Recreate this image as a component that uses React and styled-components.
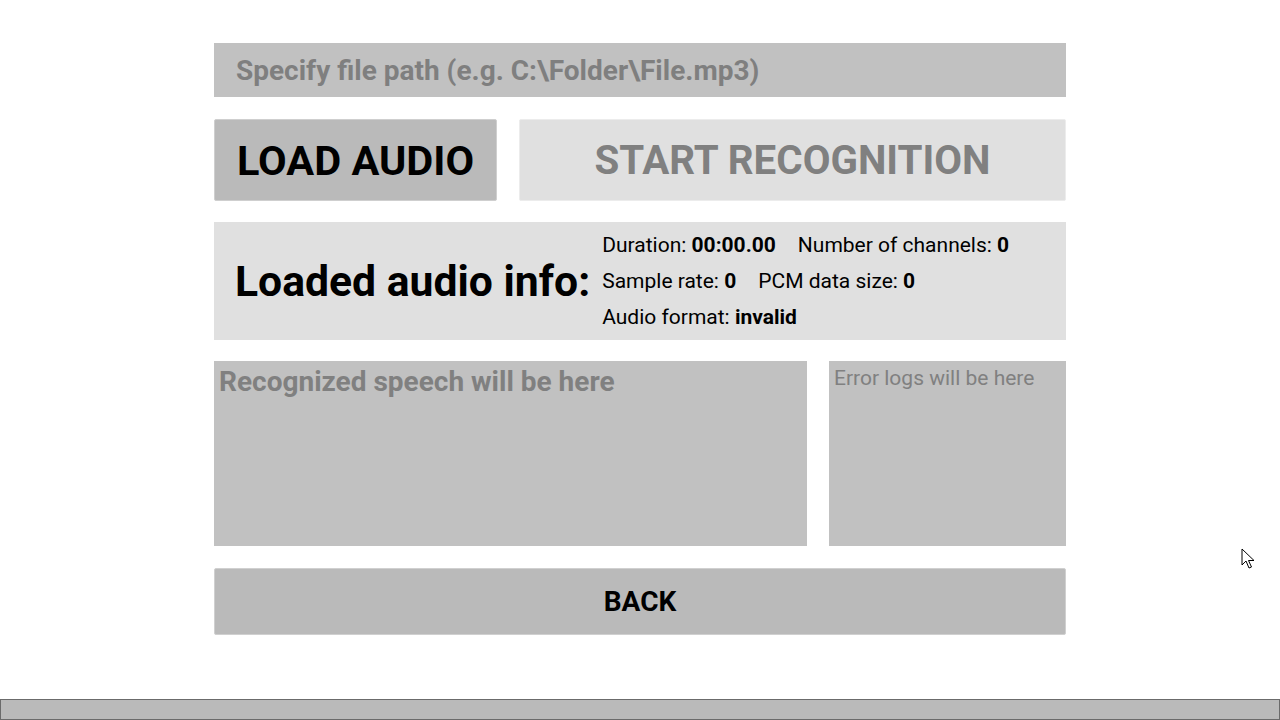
import React from "react";
import styled, { createGlobalStyle } from "styled-components";

const Global = createGlobalStyle`
  html, body { margin: 0; padding: 0; background: #ffffff; }
  body { font-family: Roboto, "Liberation Sans", sans-serif; }
  * { box-sizing: border-box; }
`;

const Page = styled.div`
  position: relative;
  width: 1280px;
  height: 720px;
  display: flex;
  flex-direction: column;
  overflow: hidden;
`;

const Content = styled.main`
  width: 852px;
  margin: 43px auto 0;
  display: flex;
  flex-direction: column;
  gap: 21px;
`;

const PathInput = styled.input`
  height: 54px;
  width: 100%;
  border: none;
  outline: none;
  background: #c1c1c1;
  padding: 0 22px;
  font-family: Roboto, "Liberation Sans", sans-serif;
  font-weight: 700;
  font-size: 28px;
  color: #7f7f7f;
  &::placeholder { color: #7f7f7f; opacity: 1; }
`;

const ButtonRow = styled.div`
  display: flex;
  gap: 22px;
  height: 82px;
  margin-top: 1px;
`;

const Button = styled.button`
  flex: ${(p) => (p.$grow ? "1 1 auto" : "0 0 auto")};
  width: ${(p) => (p.$width ? `${p.$width}px` : "auto")};
  height: 100%;
  border: 1px solid ${(p) => p.$border};
  border-radius: 2px;
  background: ${(p) => p.$bg};
  color: ${(p) => p.$color};
  font-family: Roboto, "Liberation Sans", sans-serif;
  font-weight: 700;
  font-size: ${(p) => p.$size}px;
  padding: 0;
  display: flex;
  align-items: center;
  justify-content: center;
  cursor: default;
`;

const InfoPanel = styled.section`
  height: 118px;
  background: #e0e0e0;
  display: flex;
  align-items: center;
  padding-left: 21px;
`;

const InfoTitle = styled.h2`
  margin: 0 12px 0 0;
  font-size: 42.7px;
  font-weight: 700;
  color: #000;
  white-space: nowrap;
`;

const InfoList = styled.div`
  display: flex;
  flex-direction: column;
`;

const InfoLine = styled.div`
  display: flex;
  gap: 22px;
  font-size: 21px;
  line-height: 36px;
  color: #000;
`;

const Field = styled.span`
  white-space: nowrap;
  b { font-weight: 700; }
`;

const Outputs = styled.div`
  display: flex;
  gap: 22px;
  height: 185px;
`;

const OutputBox = styled.div`
  flex: ${(p) => (p.$width ? `0 0 ${p.$width}px` : "1 1 auto")};
  background: #c1c1c1;
  color: #808080;
  font-size: ${(p) => p.$size}px;
  font-weight: ${(p) => p.$weight};
  padding: ${(p) => p.$pad};
  line-height: 1.2;
`;

const BackButton = styled(Button)`
  flex: 0 0 auto;
  height: 67px;
  width: 100%;
  margin-top: 1px;
`;

const StatusBar = styled.footer`
  margin-top: auto;
  height: 21px;
  width: 100%;
  background: #bababa;
  border: 1px solid #6b6b6b;
`;

const Cursor = styled.svg`
  position: absolute;
  left: 1241px;
  top: 548px;
`;

export default function App() {
  return (
    <Page>
      <Global />
      <Content>
        <PathInput placeholder="Specify file path (e.g. C:\Folder\File.mp3)" />
        <ButtonRow>
          <Button $width={283} $bg="#bababa" $border="#cfcfcf" $color="#000" $size={41.5}>
            LOAD AUDIO
          </Button>
          <Button $grow $bg="#e0e0e0" $border="#ececec" $color="#808080" $size={40.3}>
            START RECOGNITION
          </Button>
        </ButtonRow>
        <InfoPanel>
          <InfoTitle>Loaded audio info:</InfoTitle>
          <InfoList>
            <InfoLine>
              <Field>Duration: <b>00:00.00</b></Field>
              <Field>Number of channels: <b>0</b></Field>
            </InfoLine>
            <InfoLine>
              <Field>Sample rate: <b>0</b></Field>
              <Field>PCM data size: <b>0</b></Field>
            </InfoLine>
            <InfoLine>
              <Field>Audio format: <b>invalid</b></Field>
            </InfoLine>
          </InfoList>
        </InfoPanel>
        <Outputs>
          <OutputBox $size={28} $weight={700} $pad="4px 5px">
            Recognized speech will be here
          </OutputBox>
          <OutputBox $width={237} $size={21} $weight={400} $pad="5px 5px">
            Error logs will be here
          </OutputBox>
        </Outputs>
        <BackButton $bg="#bababa" $border="#d0d0d0" $color="#000" $size={28}>
          BACK
        </BackButton>
      </Content>
      <StatusBar />
      <Cursor width="14" height="22" viewBox="0 0 14 22">
        <path d="M1 1 L1 17 L5 13 L8 20 L10.5 19 L7.5 12.5 L13 12.5 Z" fill="#ffffff" stroke="#000" strokeWidth="1" strokeLinejoin="miter" />
      </Cursor>
    </Page>
  );
}
